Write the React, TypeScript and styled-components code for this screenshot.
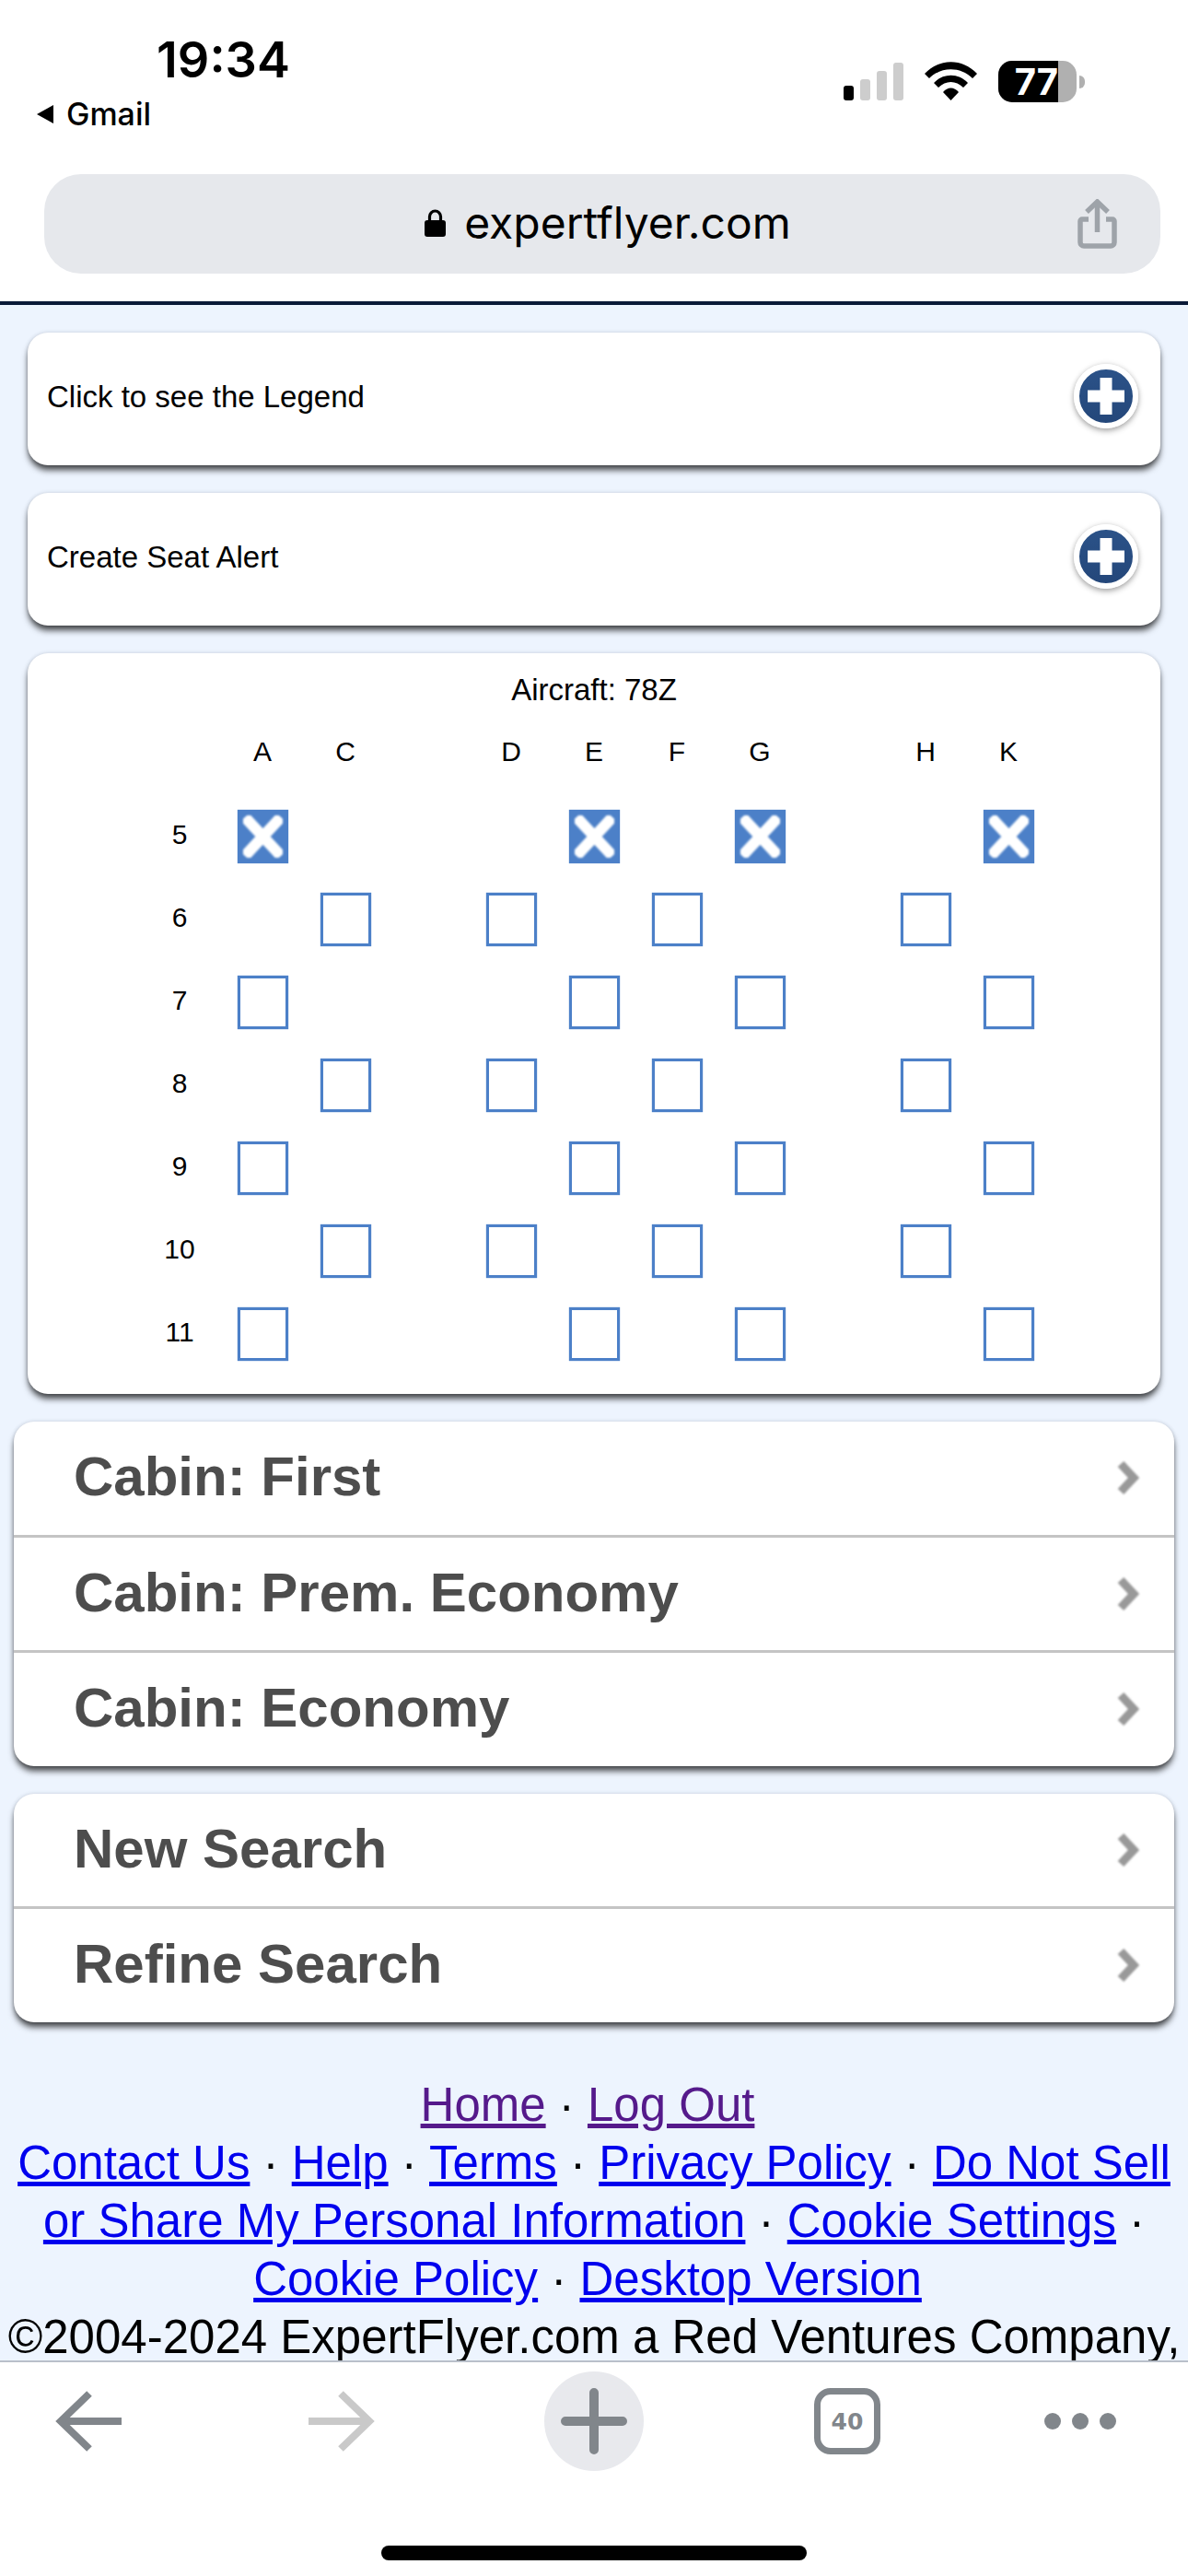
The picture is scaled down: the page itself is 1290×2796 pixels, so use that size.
import React from "react";
import styled, { createGlobalStyle } from "styled-components";

const GlobalStyle = createGlobalStyle`
    html, body {
        margin: 0;
        padding: 0;
        background: #ffffff;
    }
`;

const Phone = styled.div`
    width: 1290px;
    height: 2796px;
    display: flex;
    flex-direction: column;
    overflow: hidden;
    background: #edf4fe;
    font-family: "Liberation Sans", Arial, sans-serif;
`;

const Header = styled.header`
    height: 327px;
    flex: none;
    background: #ffffff;
    display: flex;
    flex-direction: column;
    border-bottom: 4px solid #0a1a38;
    box-sizing: content-box;
`;

const StatusBar = styled.div`
    height: 189px;
    display: flex;
    justify-content: space-between;
    box-sizing: border-box;
    padding: 34px 112px 0 38px;
`;

const StatusLeft = styled.div`
    display: flex;
    flex-direction: column;
`;

const Time = styled.div`
    font-family: Inter, sans-serif;
    font-weight: 600;
    font-size: 54px;
    line-height: 62px;
    margin-left: 132px;
    color: #000;
`;

const BackToApp = styled.div`
    display: flex;
    align-items: center;
    gap: 12px;
    font-family: Inter, sans-serif;
    font-weight: 500;
    font-size: 34px;
    line-height: 38px;
    margin-top: 9px;
    color: #000;
`;

const StatusRight = styled.div`
    display: flex;
    align-items: flex-end;
    gap: 23px;
    height: 75px;
`;

const Signal = styled.div`
    display: flex;
    align-items: flex-end;
    gap: 7px;
`;

const SignalBar = styled.div<{ $h: number; $on?: boolean }>`
    width: 11px;
    height: ${(p) => p.$h}px;
    border-radius: 3px;
    background: ${(p) => (p.$on ? "#000" : "#cdcdcd")};
`;

const Battery = styled.div`
    display: flex;
    align-items: center;
    gap: 3px;
    margin-bottom: -2px;
`;

const BatteryBody = styled.div`
    width: 85px;
    height: 45px;
    border-radius: 15px;
    overflow: hidden;
    display: flex;
    background: #b0b0b0;
`;

const BatteryFill = styled.div`
    width: 65px;
    background: #000;
    color: #fff;
    font-family: Inter, sans-serif;
    font-weight: 700;
    font-size: 40px;
    line-height: 45px;
    text-align: right;
`;

const BatteryNub = styled.div`
    width: 6px;
    height: 14px;
    border-radius: 0 7px 7px 0;
    background: #b0b0b0;
`;

const UrlBar = styled.div`
    height: 108px;
    margin: 0 30px 0 48px;
    border-radius: 40px;
    background: #e6e8ec;
    display: grid;
    grid-template-columns: 1fr auto 1fr;
    align-items: center;
`;

const Address = styled.div`
    grid-column: 2;
    display: flex;
    align-items: center;
    gap: 20px;
    margin-left: 12px;
    margin-top: -3px;
    font-family: Inter, sans-serif;
    font-size: 48px;
    color: #000;
`;

const ShareSlot = styled.div`
    grid-column: 3;
    display: flex;
    justify-content: flex-end;
    padding-right: 47px;
`;

const Content = styled.main`
    flex: 1;
    min-height: 0;
    overflow: hidden;
    padding-top: 30px;
`;

const Card = styled.section<{ $wide?: boolean }>`
    margin: 0 ${(p) => (p.$wide ? 15 : 30)}px 30px;
    background: #ffffff;
    border-radius: 22px;
    overflow: hidden;
    box-shadow: 0 6px 7px -1px rgba(0, 0, 0, 0.72), 0 0 4px rgba(40, 50, 70, 0.18);
`;

const CollapsibleRow = styled.div`
    height: 144px;
    box-sizing: border-box;
    display: flex;
    align-items: center;
    justify-content: space-between;
    padding: 0 24px 4px 21px;
    font-size: 33px;
    color: #000;
`;

const PlusBadge = styled.div`
    width: 58px;
    height: 58px;
    margin-top: -2px;
    border-radius: 50%;
    border: 6px solid #fff;
    background: linear-gradient(#2b5288, #24477a);
    box-shadow: 0 3px 6px rgba(0, 0, 0, 0.3), 0 0 6px rgba(0, 0, 0, 0.12);
    filter: blur(0.6px);
    display: flex;
    align-items: center;
    justify-content: center;
`;

const SeatMapCard = styled.div`
    padding: 20px 0 20px;
`;

const Aircraft = styled.div`
    text-align: center;
    font-size: 33px;
    line-height: 40px;
    color: #000;
`;

const SeatGrid = styled.div`
    display: grid;
    grid-template-columns: repeat(11, 90px);
    grid-auto-rows: 90px;
    justify-content: center;
    margin-top: 4px;
    font-size: 30px;
    color: #000;
`;

const Cell = styled.div`
    display: flex;
    align-items: center;
    justify-content: center;
`;

const LabelCell = styled(Cell)`
    padding-bottom: 4px;
`;

const Seat = styled.div<{ $taken?: boolean }>`
    width: 55px;
    height: 58px;
    box-sizing: border-box;
    border: 3px solid #4c80c8;
    background: ${(p) => (p.$taken ? "#4c80c8" : "#ffffff")};
    box-shadow: 0 0 1px #4c80c8;
    display: flex;
    align-items: center;
    justify-content: center;
`;

const SeatCross = styled.svg`
    filter: blur(1px);
`;

const ListRow = styled.div<{ $last?: boolean }>`
    height: 122.5px;
    box-sizing: content-box;
    display: flex;
    align-items: center;
    justify-content: space-between;
    padding: 0 38px 0 65px;
    font-size: 60px;
    font-weight: 700;
    color: #4d4d4d;
    border-bottom: ${(p) => (p.$last ? "none" : "3px solid #c4c4c4")};
`;

const ListLabel = styled.span`
    margin-top: -3px;
`;

const ChevronIcon = styled.svg`
    filter: blur(0.8px);
`;

const Footer = styled.footer`
    margin-top: 58px;
    text-align: center;
    font-size: 51px;
    line-height: 63px;
    color: #000;
    white-space: nowrap;
`;

const FooterLine = styled.div<{ $short?: boolean }>`
    padding-right: ${(p) => (p.$short ? 14 : 0)}px;
`;

const FooterLink = styled.a<{ $visited?: boolean }>`
    color: ${(p) => (p.$visited ? "#551a8b" : "#0000ee")};
    text-decoration: underline;
`;

const BottomBar = styled.nav`
    height: 234px;
    flex: none;
    background: #ffffff;
    border-top: 2px solid #b9c0ca;
    box-sizing: border-box;
    display: flex;
    flex-direction: column;
    align-items: center;
`;

const ToolRow = styled.div`
    width: 100%;
    height: 128px;
    box-sizing: border-box;
    padding-left: 60px;
    display: grid;
    grid-template-columns: 275px 256px 293px 250px 78px;
    align-items: center;
`;

const NewTab = styled.div`
    width: 108px;
    height: 108px;
    border-radius: 50%;
    background: #e8e9ed;
    display: flex;
    align-items: center;
    justify-content: center;
`;

const TabCount = styled.div`
    width: 72px;
    height: 72px;
    box-sizing: border-box;
    border: 7px solid #81868b;
    border-radius: 18px;
    display: flex;
    align-items: center;
    justify-content: center;
    font-family: "DejaVu Sans", sans-serif;
    font-weight: 700;
    font-size: 25px;
    color: #81868b;
`;

const MoreDots = styled.div`
    display: flex;
    gap: 12px;
`;

const Dot = styled.div`
    width: 18px;
    height: 18px;
    border-radius: 50%;
    background: #81868b;
`;

const HomeIndicator = styled.div`
    width: 462px;
    height: 16px;
    margin-top: 71px;
    border-radius: 8px;
    background: #000;
`;

const Chevron = () => (
    <ChevronIcon width="26" height="38" viewBox="0 0 26 38">
        <path d="M6 4 L20 19 L6 34" fill="none" stroke="#999999" strokeWidth="9" />
    </ChevronIcon>
);

const PlusIcon = () => (
    <svg width="40" height="40" viewBox="0 0 40 40">
        <path d="M13.5 0h13v13.5H40v13H26.5V40h-13V26.5H0v-13h13.5z" fill="#ffffff" />
    </svg>
);

const SeatX = () => (
    <SeatCross width="43" height="46" viewBox="0 0 43 46">
        <path d="M2 2 L41 44 M41 2 L2 44" stroke="#ffffff" strokeWidth="12" fill="none" />
    </SeatCross>
);

const columns = ["A", "C", "", "D", "E", "F", "G", "", "H", "K"];
const oddRow = ["A", "E", "G", "K"];
const evenRow = ["C", "D", "F", "H"];
const rows = [5, 6, 7, 8, 9, 10, 11];

const List = ({ items }: { items: string[] }) => (
    <Card $wide>
        {items.map((item, i) => (
            <ListRow key={item} $last={i === items.length - 1}>
                <ListLabel>{item}</ListLabel>
                <Chevron />
            </ListRow>
        ))}
    </Card>
);

const App = () => {
    return (
        <Phone>
            <GlobalStyle />
            <Header>
                <StatusBar>
                    <StatusLeft>
                        <Time>19:34</Time>
                        <BackToApp>
                            <svg width="22" height="22" viewBox="0 0 22 22">
                                <path d="M20 1 L20 21 L2 11 Z" fill="#000" />
                            </svg>
                            Gmail
                        </BackToApp>
                    </StatusLeft>
                    <StatusRight>
                        <Signal>
                            <SignalBar $h={16} $on />
                            <SignalBar $h={23} />
                            <SignalBar $h={32} />
                            <SignalBar $h={41} />
                        </Signal>
                        <svg width="57" height="42" viewBox="0 0 57 42">
                            <path d="M0 13 C16 -4 41 -4 57 13 L52 18 C39 5 18 5 5 18 Z" fill="#000" />
                            <path d="M10 23 C20 12 37 12 47 23 L42 28 C34 20 23 20 15 28 Z" fill="#000" />
                            <path d="M20 33 C25 27 32 27 37 33 L28.5 42 Z" fill="#000" />
                        </svg>
                        <Battery>
                            <BatteryBody>
                                <BatteryFill>77</BatteryFill>
                            </BatteryBody>
                            <BatteryNub />
                        </Battery>
                    </StatusRight>
                </StatusBar>
                <UrlBar>
                    <Address>
                        <svg width="23" height="30" viewBox="0 0 23 30">
                            <path d="M5.5 13 V8 a6 6 0 0 1 12 0 V13" fill="none" stroke="#000" strokeWidth="3.2" />
                            <rect x="0" y="12" width="23" height="18" rx="3" fill="#000" />
                        </svg>
                        expertflyer.com
                    </Address>
                    <ShareSlot>
                        <svg width="43" height="54" viewBox="0 0 43 54" fill="none" stroke="#9ea3a9" strokeWidth="5.5">
                            <path d="M21.5 36 V4" />
                            <path d="M10 14 L21.5 3 L33 14" />
                            <path d="M12 22 H5 a2 2 0 0 0 -2 2 V47 a4 4 0 0 0 4 4 H36 a4 4 0 0 0 4 -4 V24 a2 2 0 0 0 -2 -2 H31" />
                        </svg>
                    </ShareSlot>
                </UrlBar>
            </Header>
            <Content>
                <Card>
                    <CollapsibleRow>
                        Click to see the Legend
                        <PlusBadge>
                            <PlusIcon />
                        </PlusBadge>
                    </CollapsibleRow>
                </Card>
                <Card>
                    <CollapsibleRow>
                        Create Seat Alert
                        <PlusBadge>
                            <PlusIcon />
                        </PlusBadge>
                    </CollapsibleRow>
                </Card>
                <Card>
                    <SeatMapCard>
                        <Aircraft>Aircraft: 78Z</Aircraft>
                        <SeatGrid>
                            <Cell />
                            {columns.map((c, i) => (
                                <LabelCell key={i}>{c}</LabelCell>
                            ))}
                            {rows.map((row) => {
                                const seats = row % 2 === 1 ? oddRow : evenRow;
                                return (
                                    <React.Fragment key={row}>
                                        <LabelCell>{row}</LabelCell>
                                        {columns.map((c, i) => (
                                            <Cell key={i}>
                                                {seats.includes(c) && (
                                                    <Seat $taken={row === 5}>{row === 5 && <SeatX />}</Seat>
                                                )}
                                            </Cell>
                                        ))}
                                    </React.Fragment>
                                );
                            })}
                        </SeatGrid>
                    </SeatMapCard>
                </Card>
                <List items={["Cabin: First", "Cabin: Prem. Economy", "Cabin: Economy"]} />
                <List items={["New Search", "Refine Search"]} />
                <Footer>
                    <FooterLine $short>
                        <FooterLink $visited>Home</FooterLink> · <FooterLink $visited>Log Out</FooterLink>
                    </FooterLine>
                    <FooterLine>
                        <FooterLink>Contact Us</FooterLink> · <FooterLink>Help</FooterLink> · <FooterLink>Terms</FooterLink> ·{" "}
                        <FooterLink>Privacy Policy</FooterLink> · <FooterLink>Do Not Sell</FooterLink>
                    </FooterLine>
                    <FooterLine>
                        <FooterLink>or Share My Personal Information</FooterLink> · <FooterLink>Cookie Settings</FooterLink> ·
                    </FooterLine>
                    <FooterLine $short>
                        <FooterLink>Cookie Policy</FooterLink> · <FooterLink>Desktop Version</FooterLink>
                    </FooterLine>
                    <FooterLine>©2004-2024 ExpertFlyer.com a Red Ventures Company,</FooterLine>
                </Footer>
            </Content>
            <BottomBar>
                <ToolRow>
                    <svg width="72" height="66" viewBox="0 0 72 66" fill="none" stroke="#81868b" strokeWidth="8">
                        <path d="M72 33 H6" />
                        <path d="M37 3 L6 33 L37 63" />
                    </svg>
                    <svg width="72" height="66" viewBox="0 0 72 66" fill="none" stroke="#c9c9c9" strokeWidth="8">
                        <path d="M0 33 H66" />
                        <path d="M35 3 L66 33 L35 63" />
                    </svg>
                    <NewTab>
                        <svg width="72" height="72" viewBox="0 0 72 72" fill="none" stroke="#81868b" strokeWidth="10" strokeLinecap="round">
                            <path d="M36 5 V67 M5 36 H67" />
                        </svg>
                    </NewTab>
                    <TabCount>40</TabCount>
                    <MoreDots>
                        <Dot />
                        <Dot />
                        <Dot />
                    </MoreDots>
                </ToolRow>
                <HomeIndicator />
            </BottomBar>
        </Phone>
    );
};

export default App;
